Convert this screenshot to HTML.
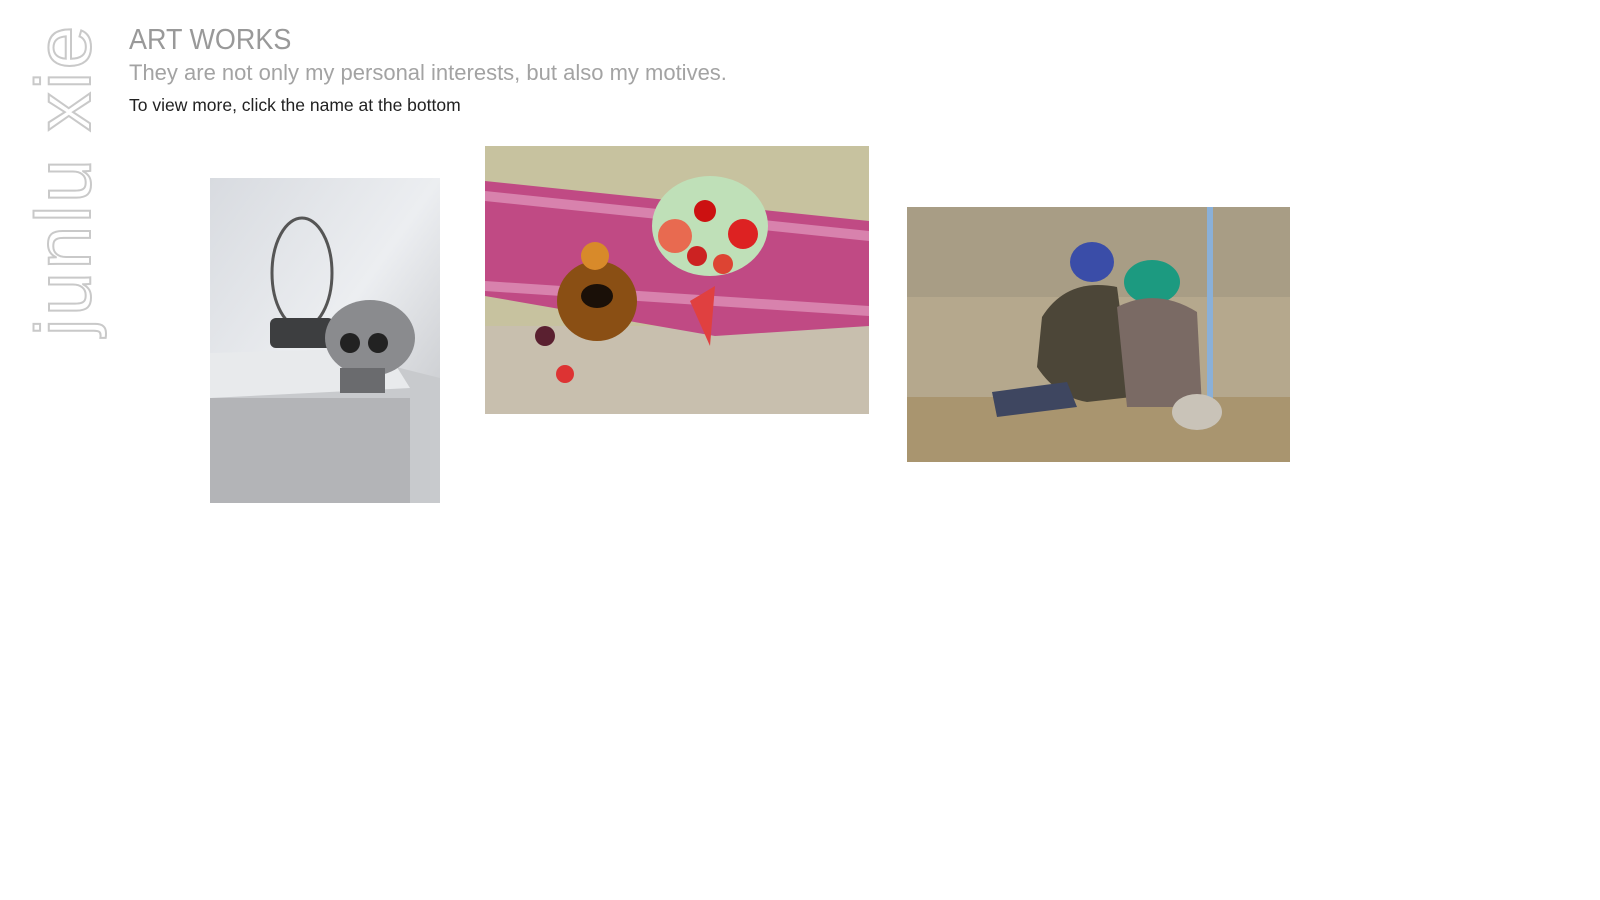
<!DOCTYPE html>
<html><head><meta charset="utf-8"><style>
body{margin:0;width:1600px;height:900px;background:#fff;position:relative;overflow:hidden;font-family:"Liberation Sans",sans-serif}
.logo span{position:absolute;left:30px;top:336px;transform-origin:0 0;transform:rotate(-90deg);font-size:78px;color:transparent;-webkit-text-stroke:2px #c9c9c9;white-space:nowrap;letter-spacing:3px;line-height:66px}
.t1{position:absolute;left:129px;top:24px;font-size:29px;color:#999;white-space:nowrap;transform-origin:0 0;transform:scaleX(.93)}
.t2{position:absolute;left:129px;top:60px;font-size:22px;color:#a3a3a3;white-space:nowrap}
.t3{position:absolute;left:129px;top:95px;font-size:17.5px;color:#222;white-space:nowrap}
.img{position:absolute}
</style></head><body>
<div class="logo"><span>junlu xie</span></div>
<div class="t1">ART WORKS</div>
<div class="t2">They are not only my personal interests, but also my motives.</div>
<div class="t3">To view more, click the name at the bottom</div>

<svg class="img" style="left:210px;top:178px" width="230" height="325" viewBox="0 0 230 325">
<defs><linearGradient id="g1" x1="0" y1="0" x2="1" y2="1"><stop offset="0" stop-color="#d8dbe0"/><stop offset=".5" stop-color="#eceef1"/><stop offset="1" stop-color="#bdbfc3"/></linearGradient></defs>
<rect width="230" height="325" fill="url(#g1)"/>
<polygon points="0,190 150,180 230,200 230,325 0,325" fill="#c8cacd"/>
<polygon points="0,175 175,170 200,210 0,220" fill="#e8eaec"/>
<rect x="0" y="220" width="200" height="105" fill="#a9abae" opacity=".7"/>
<ellipse cx="92" cy="95" rx="30" ry="55" fill="none" stroke="#555" stroke-width="3"/>
<rect x="60" y="140" width="64" height="30" rx="6" fill="#3d3e40"/>
<ellipse cx="160" cy="160" rx="45" ry="38" fill="#8a8b8e"/>
<ellipse cx="140" cy="165" rx="10" ry="10" fill="#222"/><ellipse cx="168" cy="165" rx="10" ry="10" fill="#222"/>
<rect x="130" y="190" width="45" height="25" fill="#6a6b6e"/>
</svg>

<svg class="img" style="left:485px;top:146px" width="384" height="268" viewBox="0 0 384 268">
<rect width="384" height="268" fill="#c7c29f"/>
<rect y="180" width="384" height="88" fill="#c8bfae"/>
<polygon points="0,35 384,75 384,180 230,190 0,150" fill="#c04a84"/>
<polygon points="0,45 384,85 384,95 0,55" fill="#e8a8c8" opacity=".6"/>
<polygon points="0,135 384,160 384,170 0,145" fill="#e8a8c8" opacity=".6"/>
<ellipse cx="225" cy="80" rx="58" ry="50" fill="#bfe0b8"/>
<circle cx="258" cy="88" r="15" fill="#d22"/><circle cx="220" cy="65" r="11" fill="#c11"/><circle cx="238" cy="118" r="10" fill="#d43"/><circle cx="190" cy="90" r="17" fill="#e86a50"/><circle cx="212" cy="110" r="10" fill="#c22"/>
<ellipse cx="112" cy="155" rx="40" ry="40" fill="#8a4f14"/>
<ellipse cx="112" cy="150" rx="16" ry="12" fill="#1a1008"/>
<circle cx="110" cy="110" r="14" fill="#d88a2a"/>
<polygon points="205,155 230,140 225,200" fill="#e04040"/>
<circle cx="80" cy="228" r="9" fill="#d33"/>
<circle cx="60" cy="190" r="10" fill="#5a2030"/>
</svg>

<svg class="img" style="left:907px;top:207px" width="383" height="255" viewBox="0 0 383 255">
<rect width="383" height="255" fill="#b5a88d"/>
<rect width="383" height="90" fill="#a89d85"/>
<rect y="190" width="383" height="65" fill="#a9956f"/>
<rect x="300" y="0" width="6" height="200" fill="#8ab0d8"/>
<ellipse cx="185" cy="55" rx="22" ry="20" fill="#3a4da8"/>
<path d="M135 110 Q160 70 210 80 L225 190 L180 195 Q150 190 130 160 Z" fill="#4c4638"/>
<path d="M85 185 L160 175 L170 200 L90 210 Z" fill="#3e4660"/>
<ellipse cx="245" cy="75" rx="28" ry="22" fill="#1c9a80"/>
<path d="M210 100 Q250 80 290 105 L295 200 L220 200 Z" fill="#7a6a64"/>
<ellipse cx="290" cy="205" rx="25" ry="18" fill="#c9c3b8"/>
</svg>
</body></html>
